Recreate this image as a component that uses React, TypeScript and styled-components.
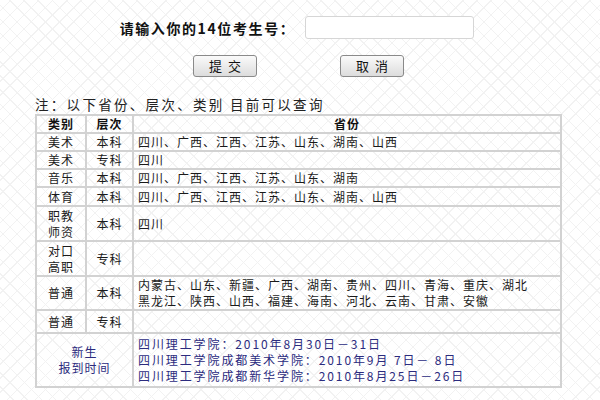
import * as React from 'react';
import styled, { createGlobalStyle } from 'styled-components';

const GlobalStyle = createGlobalStyle`
  html, body {
    margin: 0;
    padding: 0;
    background-color: #ffffff;
    background-image:
      repeating-linear-gradient(45deg, transparent 0, transparent 9px, #f2f2f2 9px, #f2f2f2 10px),
      repeating-linear-gradient(-45deg, transparent 0, transparent 9px, #f2f2f2 9px, #f2f2f2 10px);
    font-family: "Noto Sans CJK SC", "Noto Sans", sans-serif;
    color: #222;
  }
`;

const Page = styled.div`
  width: 600px;
  height: 400px;
  overflow: hidden;
  display: flex;
  flex-direction: column;
  align-items: center;
  padding-top: 16px;
  box-sizing: border-box;
`;

const FormRow = styled.div`
  display: flex;
  align-items: center;
  gap: 10px;
  height: 23px;
  margin-left: -6px;
`;

const Label = styled.label`
  font-size: 14px;
  font-weight: bold;
  letter-spacing: 1.6px;
  color: #111;
`;

const Input = styled.input`
  width: 169px;
  height: 23px;
  box-sizing: border-box;
  border: 1px solid #d6d6d6;
  border-radius: 3px;
  background: #fff;
  outline: none;
`;

const ButtonRow = styled.div`
  display: flex;
  gap: 83px;
  margin-top: 16px;
  margin-left: -3px;
`;

const Button = styled.button`
  width: 64px;
  height: 22px;
  box-sizing: border-box;
  border: 1px solid #8a8a8a;
  border-radius: 3px;
  background: linear-gradient(#fafafa, #dcdcdc);
  font-family: "Noto Sans CJK SC", sans-serif;
  font-size: 13px;
  color: #111;
  padding: 0;
  line-height: 20px;
  white-space: pre;
`;

const Section = styled.div`
  align-self: stretch;
  padding: 0 38px 0 35px;
  margin-top: 18px;
`;

const Note = styled.div`
  font-size: 13.5px;
  letter-spacing: 2.3px;
  line-height: 19px;
  color: #222;
`;

const Table = styled.table`
  width: 100%;
  border-collapse: collapse;
  border: 2px solid #d2d2d2;
  font-size: 12px;
  letter-spacing: 1px;
  line-height: 16px;
`;

const Th = styled.th`
  border: 2px solid #d2d2d2;
  height: 15px;
  padding: 0;
  font-weight: bold;
  text-align: center;
  color: #111;
`;

const Td = styled.td<{ $h?: number; $left?: boolean; $navy?: boolean }>`
  border: 2px solid #d2d2d2;
  height: ${(p) => p.$h ?? 16}px;
  padding: 0 ${(p) => (p.$left ? '4px' : '0')};
  text-align: ${(p) => (p.$left ? 'left' : 'center')};
  vertical-align: middle;
  color: ${(p) => (p.$navy ? '#2b2b7e' : '#1a1a1a')};
`;

const DateLine = styled.div`
  font-size: 12px;
  letter-spacing: 1.9px;
  line-height: 16px;
`;

const rows = [
  { type: '美术', level: '本科', prov: '四川、广西、江西、江苏、山东、湖南、山西', h: 16 },
  { type: '美术', level: '专科', prov: '四川', h: 16 },
  { type: '音乐', level: '本科', prov: '四川、广西、江西、江苏、山东、湖南', h: 16 },
  { type: '体育', level: '本科', prov: '四川、广西、江西、江苏、山东、湖南、山西', h: 17 },
  { type: '职教\n师资', level: '本科', prov: '四川', h: 33 },
  { type: '对口\n高职', level: '专科', prov: '', h: 33 },
  {
    type: '普通',
    level: '本科',
    prov: '内蒙古、山东、新疆、广西、湖南、贵州、四川、青海、重庆、湖北\n黑龙江、陕西、山西、福建、海南、河北、云南、甘肃、安徽',
    h: 32,
  },
  { type: '普通', level: '专科', prov: '', h: 21 },
];

const dates = [
  '四川理工学院：2010年8月30日－31日',
  '四川理工学院成都美术学院：2010年9月 7日－ 8日',
  '四川理工学院成都新华学院：2010年8月25日－26日',
];

const Lines = ({ text }: { text: string }) => (
  <>
    {text.split('\n').map((t, i) => (
      <div key={i}>{t}</div>
    ))}
  </>
);

const App = () => {
  return (
    <Page>
      <GlobalStyle />
      <FormRow>
        <Label>请输入你的14位考生号：</Label>
        <Input type="text" />
      </FormRow>
      <ButtonRow>
        <Button>{'提  交'}</Button>
        <Button>{'取  消'}</Button>
      </ButtonRow>
      <Section>
        <Note>注：以下省份、层次、类别 目前可以查询</Note>
        <Table>
          <colgroup>
            <col style={{ width: 50 }} />
            <col style={{ width: 47 }} />
            <col />
          </colgroup>
          <thead>
            <tr>
              <Th>类别</Th>
              <Th>层次</Th>
              <Th>省份</Th>
            </tr>
          </thead>
          <tbody>
            {rows.map((r, i) => (
              <tr key={i}>
                <Td $h={r.h}>
                  <Lines text={r.type} />
                </Td>
                <Td $h={r.h}>{r.level}</Td>
                <Td $h={r.h} $left>
                  <Lines text={r.prov} />
                </Td>
              </tr>
            ))}
            <tr>
              <Td $h={52} $navy colSpan={2}>
                <div>新生</div>
                <div>报到时间</div>
              </Td>
              <Td $h={52} $navy $left>
                {dates.map((d) => (
                  <DateLine key={d}>{d}</DateLine>
                ))}
              </Td>
            </tr>
          </tbody>
        </Table>
      </Section>
    </Page>
  );
};

export default App;
